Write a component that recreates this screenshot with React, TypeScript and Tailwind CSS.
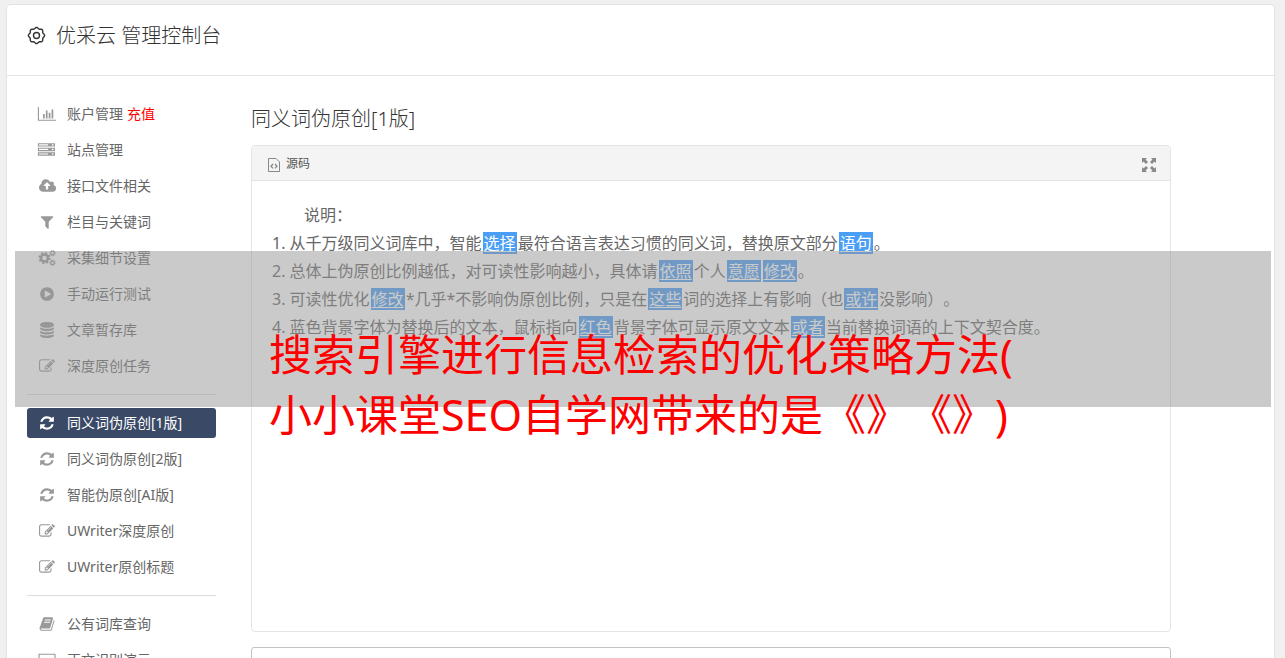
import type { ReactNode } from 'react'

interface MenuItem {
  label: string
  icon: string
  badge?: string
  active?: boolean
}

// 1792-unit glyph outlines
const GLYPHS: Record<string, string> = {
  chart:
    'M640 896v512h-192v-512h192zm320-384v896h-192v-896h192zm960 1024v128h-2048v-1536h128v1408h1920zm-640-768v640h-192v-640h192zm320-384v1024h-192v-1024h192z',
  server:
    'M0 1408h1024v-128h-1024v128zm0-512h1024v-128h-1024v128zm1632 448q0-40-28-68t-68-28-68 28-28 68 28 68 68 28 68-28 28-68zm-1632-960h1024v-128h-1024v128zm1632 448q0-40-28-68t-68-28-68 28-28 68 28 68 68 28 68-28 28-68zm0-512q0-40-28-68t-68-28-68 28-28 68 28 68 68 28 68-28 28-68zm160 832v384h-1920v-384h1920zm0-512v384h-1920v-384h1920zm0-512v384h-1920v-384h1920z',
  upload:
    'M1280 864q0-14-9-23l-352-352q-9-9-23-9t-23 9l-351 351q-10 12-10 24 0 14 9 23t23 9h224v352q0 13 9.5 22.5t22.5 9.5h192q13 0 22.5-9.5t9.5-22.5v-352h224q13 0 22.5-9.5t9.5-22.5zm640 288q0 159-112.5 271.5t-271.5 112.5h-1088q-185 0-316.5-131.5t-131.5-316.5q0-130 70-240t188-165q-2-30-2-43 0-212 150-362t362-150q156 0 285.5 87t188.5 231q71-62 166-62 106 0 181 75t75 181q0 76-41 138 130 31 213.5 135.5t83.5 238.5z',
  filter:
    'M1595 295q17 41-14 70l-493 493v742q0 42-39 59-13 5-25 5-27 0-45-19l-256-256q-19-19-19-45v-486l-493-493q-31-29-14-70 17-39 59-39h1280q42 0 59 39z',
  play: 'M896 128q209 0 385.5 103t279.5 279.5 103 385.5-103 385.5-279.5 279.5-385.5 103-385.5-103-279.5-279.5-103-385.5 103-385.5 279.5-279.5 385.5-103zm384 823q32-18 32-55t-32-55l-544-320q-31-19-64-1-32 19-32 56v640q0 37 32 56 16 8 32 8 17 0 32-9z',
  database:
    'M896 768q237 0 443-43t325-127v170q0 69-103 128t-280 93.5-385 34.5-385-34.5-280-93.5-103-128v-170q119 84 325 127t443 43zm0 768q237 0 443-43t325-127v170q0 69-103 128t-280 93.5-385 34.5-385-34.5-280-93.5-103-128v-170q119 84 325 127t443 43zm0-384q237 0 443-43t325-127v170q0 69-103 128t-280 93.5-385 34.5-385-34.5-280-93.5-103-128v-170q119 84 325 127t443 43zm0-1152q208 0 385 34.5t280 93.5 103 128v128q0 69-103 128t-280 93.5-385 34.5-385-34.5-280-93.5-103-128v-128q0-69 103-128t280-93.5 385-34.5z',
  edit: 'M888 1184l116-116-152-152-116 116v56h96v96h56zm440-720q-16-16-33 1l-350 350q-17 17-1 33t33-1l350-350q17-17 1-33zm80 594v190q0 119-84.5 203.5t-203.5 84.5h-832q-119 0-203.5-84.5t-84.5-203.5v-832q0-119 84.5-203.5t203.5-84.5h832q63 0 117 25 15 7 18 23 3 17-9 29l-49 49q-14 14-32 8-23-6-45-6h-832q-66 0-113 47t-47 113v832q0 66 47 113t113 47h832q66 0 113-47t47-113v-126q0-13 9-22l64-64q15-15 35-7t20 29zm-96-738l288 288-672 672h-288v-288zm444 132l-92 92-288-288 92-92q28-28 68-28t68 28l152 152q28 28 28 68t-28 68z',
  refresh:
    'M1639 1056q0 5-1 7-64 268-268 434.5t-478 166.5q-146 0-282.5-55t-243.5-157l-129 129q-19 19-45 19t-45-19-19-45v-448q0-26 19-45t45-19h448q26 0 45 19t19 45-19 45l-137 137q71 66 161 102t187 36q134 0 250-65t186-179q11-17 53-117 8-23 30-23h192q13 0 22.5 9.5t9.5 22.5zm25-800v448q0 26-19 45t-45 19h-448q-26 0-45-19t-19-45 19-45l138-138q-148-137-349-137-134 0-250 65t-186 179q-11 17-53 117-8 23-30 23h-199q-13 0-22.5-9.5t-9.5-22.5v-7q65-268 270-434.5t480-166.5q146 0 284 55.5t245 156.5l130-129q19-19 45-19t45 19 19 45z',
  book: 'M1703 478q40 57 18 129l-275 906q-19 64-76.5 107.5t-122.5 43.5h-923q-77 0-148.5-53.5t-99.5-131.5q-24-67-2-127 0-4 3-27t4-37q1-8-3-21.5t-3-19.5q2-11 8-21t16.5-23.5 16.5-23.5q23-38 45-91.5t30-91.5q3-10 .5-30t-.5-28q3-11 17-28t17-23q21-36 42-92t25-90q1-9-2.5-32t.5-28q4-13 22-30.5t22-22.5q19-26 42.5-84.5t27.5-96.5q1-8-3-25.5t-2-26.5q2-8 9-18t18-23 17-21q8-12 16.5-30.5t15-35 16-36 19.5-32 26.5-23.5 36-11.5 47.5 5.5l-1 3q38-9 51-9h761q74 0 114 56t18 130l-274 906q-36 119-71.5 153.5t-128.5 34.5h-869q-27 0-38 15-11 16-1 43 24 70 144 70h923q29 0 56-15.5t35-41.5l300-987q7-22 5-57 38 15 59 43zm-1064 2q-4 13 2 22.5t20 9.5h608q13 0 25.5-9.5t16.5-22.5l21-64q4-13-2-22.5t-20-9.5h-608q-13 0-25.5 9.5t-16.5 22.5zm-83 256q-4 13 2 22.5t20 9.5h608q13 0 25.5-9.5t16.5-22.5l21-64q4-13-2-22.5t-20-9.5h-608q-13 0-25.5 9.5t-16.5 22.5z',
  laptop:
    'M-64 256q0-64 64-64h1792q64 0 64 64v1088q0 64-64 64h-1792q-64 0-64-64zm128 64v960h1664v-960z',
}

const MENU: MenuItem[][] = [
  [
    { label: '账户管理', icon: 'chart', badge: '充值' },
    { label: '站点管理', icon: 'server' },
    { label: '接口文件相关', icon: 'upload' },
    { label: '栏目与关键词', icon: 'filter' },
    { label: '采集细节设置', icon: 'cogs' },
    { label: '手动运行测试', icon: 'play' },
    { label: '文章暂存库', icon: 'database' },
    { label: '深度原创任务', icon: 'edit' },
  ],
  [
    { label: '同义词伪原创[1版]', icon: 'refresh', active: true },
    { label: '同义词伪原创[2版]', icon: 'refresh' },
    { label: '智能伪原创[AI版]', icon: 'refresh' },
    { label: 'UWriter深度原创', icon: 'edit' },
    { label: 'UWriter原创标题', icon: 'edit' },
  ],
  [
    { label: '公有词库查询', icon: 'book' },
    { label: '正文识别演示', icon: 'laptop' },
  ],
]

function CogsIcon() {
  return (
    <svg viewBox="0 0 18 18" className="size-[18px]" fill="none" stroke="currentColor">
      <circle cx="6.500" cy="9" r="3.500" strokeWidth="2.600" />
      <circle cx="6.500" cy="9" r="5.200" strokeWidth="1.800" strokeDasharray="2.040 2.040" />
      <circle cx="14.500" cy="4.200" r="1.800" strokeWidth="1.300" />
      <circle cx="14.500" cy="4.200" r="2.700" strokeWidth="1" strokeDasharray="1.060 1.060" />
      <circle cx="14.500" cy="13.800" r="1.800" strokeWidth="1.300" />
      <circle cx="14.500" cy="13.800" r="2.700" strokeWidth="1" strokeDasharray="1.060 1.060" />
    </svg>
  )
}

function MenuIcon({ name }: { name: string }) {
  if (name === 'cogs') return <CogsIcon />
  return (
    <svg viewBox="0 0 1792 1792" className="size-4 overflow-visible" fill="currentColor" fillRule={name === 'laptop' ? 'evenodd' : 'nonzero'}>
      <path d={GLYPHS[name]} />
    </svg>
  )
}

function GearIcon() {
  const points = Array.from({ length: 97 }, (_, i) => {
    const a = (i / 96) * Math.PI * 2
    const r = 7.5 + 0.6 * Math.cos(a * 8)
    return `${(9.5 + r * Math.sin(a)).toFixed(2)},${(9.5 - r * Math.cos(a)).toFixed(2)}`
  }).join(' ')
  return (
    <svg viewBox="0 0 20 20" className="size-5" fill="none" stroke="currentColor" strokeWidth="1.400">
      <polygon points={points} />
      <circle cx="9.500" cy="9.500" r="3" />
    </svg>
  )
}

function Mot({ children }: { children: ReactNode }) {
  return <u className="mx-px bg-[#4a9ef5] px-px text-white underline-offset-2">{children}</u>
}

function Sidebar() {
  return (
    <nav className="w-[189px] shrink-0">
      {MENU.map((group, i) => (
        <ul key={i} className={`flex flex-col gap-1.5 ${i > 0 ? 'mt-[13px] border-t border-[#dcdcdc] pt-[13px]' : ''}`}>
          {group.map((item) => (
            <li key={item.label}>
              <a
                href="#"
                className={`flex h-[30px] items-center gap-2.5 rounded-[3px] px-2.5 text-sm whitespace-nowrap ${
                  item.active ? 'bg-[#3a4a66] text-white' : 'text-[#666]'
                }`}
              >
                <span className={`flex w-5 justify-center ${item.active ? '' : 'text-[#999]'}`}>
                  <MenuIcon name={item.icon} />
                </span>
                <span>
                  {item.label}
                  {item.badge && <span className="ml-1 text-[#f00]">{item.badge}</span>}
                </span>
              </a>
            </li>
          ))}
        </ul>
      ))}
    </nav>
  )
}

function Editor() {
  return (
    <section className="rounded border border-[#e4e4e4]">
      <div className="flex h-[35px] items-center justify-between rounded-t border-b border-[#e4e4e4] bg-[#f4f4f4] pt-0.5 pr-3.5 pl-4">
        <button type="button" className="flex items-center gap-1.5 text-xs text-[#555]">
          <svg viewBox="0 0 12 14" className="mt-0.5 h-3.5 w-3" fill="none" stroke="#888">
            <path d="M.5.5H8L11.500 4V13.500H.5Z" />
            <path d="M5 6L3 8.200L5 10.400M7 6L9 8.200L7 10.400" strokeWidth="1.300" />
          </svg>
          源码
        </button>
        <button type="button" aria-label="全屏" className="mt-0.5 text-[#888]">
          <svg viewBox="0 0 14 14" className="size-3.5" fill="currentColor">
            <path d="M0 0h5L3.500 1.500L6 4L4 6L1.500 3.500L0 5ZM14 0v5L12.500 3.500L10 6L8 4L10.500 1.500L9 0ZM0 14v-5L1.500 10.500L4 8L6 10L3.500 12.500L5 14ZM14 14h-5L10.500 12.500L8 10L10 8L12.500 10.500L14 9Z" />
          </svg>
        </button>
      </div>
      <div className="h-[450px] px-5 py-5 text-base leading-7 text-[#666]">
        <p className="indent-8">说明：</p>
        <p>1. 从千万级同义词库中，智能<Mot>选择</Mot>最符合语言表达习惯的同义词，替换原文部分<Mot>语句</Mot>。</p>
        <p>2. 总体上伪原创比例越低，对可读性影响越小，具体请<Mot>依照</Mot>个人<Mot>意愿</Mot><Mot>修改</Mot>。</p>
        <p>3. 可读性优化<Mot>修改</Mot>*几乎*不影响伪原创比例，只是在<Mot>这些</Mot>词的选择上有影响（也<Mot>或许</Mot>没影响）。</p>
        <p>4. 蓝色背景字体为替换后的文本，鼠标指向<Mot>红色</Mot>背景字体可显示原文文本<Mot>或者</Mot>当前替换词语的上下文契合度。</p>
      </div>
    </section>
  )
}

export default function App() {
  return (
    <div className="relative h-screen overflow-hidden bg-[#f0f0f0] pt-[5px] pr-[11px] pl-[7px] font-['Noto_Sans','Noto_Sans_CJK_SC',sans-serif] [text-spacing-trim:space-all]">
      <div className="min-h-full rounded-t bg-white shadow-[0_0_0_1px_#e4e4e4]">
        <header className="flex h-[71px] items-center gap-[9px] border-b border-[#e4e4e4] px-5 pb-2 text-[#333]">
          <GearIcon />
          <h1 className="text-xl font-light">优采云 管理控制台</h1>
        </header>
        <div className="flex gap-[35px] pt-[23px] pl-5">
          <Sidebar />
          <main className="mr-[103px] min-w-0 flex-1">
            <h2 className="mt-[5px] mb-[11px] text-xl leading-[30px] font-light text-[#333]">同义词伪原创[1版]</h2>
            <Editor />
            <textarea aria-label="正文" className="mt-[15px] block h-40 w-full resize-none rounded-[3px] border border-[#c4c4c4]" />
          </main>
        </div>
      </div>

      <div className="absolute top-[251px] right-3.5 left-[15px] h-[156px] bg-[#969696]/50" />
      <p className="absolute top-[325px] left-[269px] text-[43px] leading-[60px] whitespace-nowrap text-[#f00]">
        搜索引擎进行信息检索的优化策略方法(
        <br />
        小小课堂SEO自学网带来的是《》《》)
      </p>
    </div>
  )
}
